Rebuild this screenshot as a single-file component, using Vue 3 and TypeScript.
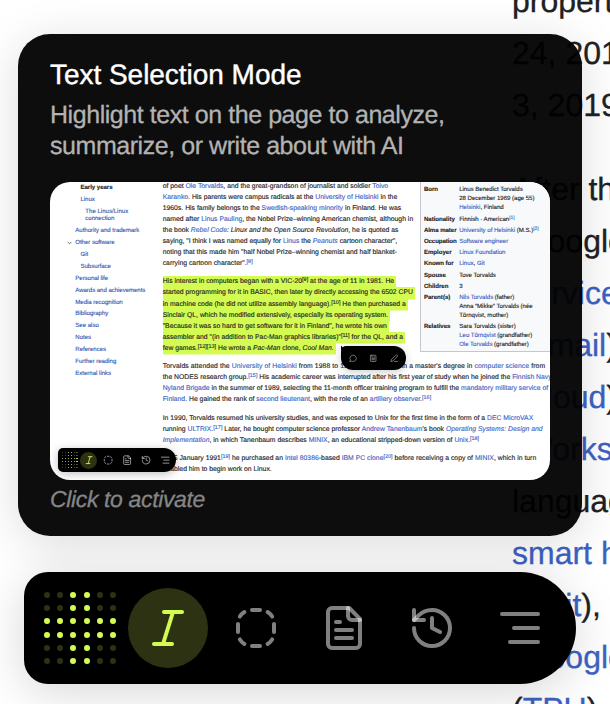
<script setup lang="ts">
interface Token { text: string; kind: string }
interface Line { text: string; width: number; mark?: boolean }
interface NavItem { text: string; width: number; level: number; kind?: string }
interface Fact { label: string; labelWidth: number; values: Line[] }

// Inline notation: [link], *italic*, {italic link}, ^reference^, ~linked reference~
function parse(source: string): Token[] {
  const kinds: Record<string, string> = { '[': 'link', '*': 'em', '{': 'em link', '^': 'sup', '~': 'sup link' }
  return (source.match(/\[[^\]]*\]|\*[^*]*\*|\{[^}]*\}|\^[^^]*\^|~[^~]*~|[^[*{^~]+/g) ?? []).map((part) => {
    const kind = kinds[part[0]]
    if (!kind) return { text: part, kind: '' }
    const inner = part.slice(1, -1)
    return { text: kind.startsWith('sup') ? `[${inner}]` : inner, kind }
  })
}

// Tracks a line of text so that it spans the given width.
const vFit = {
  mounted(el: HTMLElement, binding: { value: number }) {
    const count = (el.textContent ?? '').length
    const natural = el.getBoundingClientRect().width
    if (count > 1) el.style.letterSpacing = `${(binding.value - natural) / count}px`
  },
}

const pageParagraphs: string[][] = [
  ['properties', '24, 2015', '3, 2019.'],
  ['After the', '(Google', '[Services]', '([Gmail]),', '([Cloud]),', '([Workspace]', 'language', '[smart home]', '[Fitbit]), and', '([Google]', '([TPU]),'],
]

const paragraphs: Line[][] = [
  [
    { text: 'of poet [Ole Torvalds], and the great-grandson of journalist and soldier [Toivo]', width: 225.5 },
    { text: '[Karanko]. His parents were campus radicals at the [University of Helsinki] in the', width: 234.5 },
    { text: '1960s. His family belongs to the [Swedish-speaking minority] in Finland. He was', width: 238.5 },
    { text: 'named after [Linus Pauling], the Nobel Prize–winning American chemist, although in', width: 250.5 },
    { text: 'the book {Rebel Code}*: Linux and the Open Source Revolution*, he is quoted as', width: 235.8 },
    { text: 'saying, "I think I was named equally for [Linus] the {Peanuts} cartoon character",', width: 234.5 },
    { text: 'noting that this made him "half Nobel Prize–winning chemist and half blanket-', width: 234.2 },
    { text: 'carrying cartoon character".~8~', width: 90 },
  ],
  [
    { text: 'His interest in computers began with a VIC-20^9^ at the age of 11 in 1981. He', width: 231.5, mark: true },
    { text: 'started programming for it in BASIC, then later by directly accessing the 6502 CPU', width: 250.3, mark: true },
    { text: 'in machine code (he did not utilize assembly language).^10^ He then purchased a', width: 243.2, mark: true },
    { text: 'Sinclair QL, which he modified extensively, especially its operating system.', width: 225.5, mark: true },
    { text: '"Because it was so hard to get software for it in Finland", he wrote his own', width: 224.2, mark: true },
    { text: 'assembler and "(in addition to Pac-Man graphics libraries)"^11^ for the QL, and a', width: 240.3, mark: true },
    { text: 'few games.^12^^13^ He wrote a *Pac-Man* clone, *Cool Man*.', width: 171, mark: true },
  ],
  [
    { text: 'Torvalds attended the [University of Helsinki] from 1988 to 1996, graduating with a master\'s degree in [computer science] from', width: 382.5 },
    { text: 'the NODES research group.~15~ His academic career was interrupted after his first year of study when he joined the [Finnish Navy]', width: 389 },
    { text: '[Nyland Brigade] in the summer of 1989, selecting the 11-month officer training program to fulfill the [mandatory military service of]', width: 385.5 },
    { text: '[Finland]. He gained the rank of [second lieutenant], with the role of an [artillery observer].~16~', width: 268.5 },
  ],
  [
    { text: 'In 1990, Torvalds resumed his university studies, and was exposed to Unix for the first time in the form of a [DEC MicroVAX]', width: 370.5 },
    { text: 'running [ULTRIX].~17~ Later, he bought computer science professor [Andrew Tanenbaum]\'s book {Operating Systems: Design and}', width: 380 },
    { text: '{Implementation}, in which Tanenbaum describes [MINIX], an educational stripped-down version of [Unix].~18~', width: 316.5 },
  ],
  [
    { text: 'On 5 January 1991~19~ he purchased an [Intel 80386]-based [IBM PC clone]~20~ before receiving a copy of [MINIX], which in turn', width: 373.5 },
    { text: 'enabled him to begin work on Linux.', width: 109 },
  ],
]

const nav: NavItem[] = [
  { text: 'Early years', width: 32, level: 1, kind: 'current' },
  { text: 'Linux', width: 14.3, level: 1 },
  { text: 'The Linus/Linux', width: 43, level: 2, kind: 'wrapped' },
  { text: 'connection', width: 29, level: 2 },
  { text: 'Authority and trademark', width: 64, level: 0 },
  { text: 'Other software', width: 39.2, level: 0, kind: 'open' },
  { text: 'Git', width: 7.8, level: 1 },
  { text: 'Subsurface', width: 30.4, level: 1 },
  { text: 'Personal life', width: 32.8, level: 0 },
  { text: 'Awards and achievements', width: 70, level: 0 },
  { text: 'Media recognition', width: 47.3, level: 0 },
  { text: 'Bibliography', width: 33, level: 0 },
  { text: 'See also', width: 23.5, level: 0 },
  { text: 'Notes', width: 15.7, level: 0 },
  { text: 'References', width: 30.7, level: 0 },
  { text: 'Further reading', width: 41, level: 0 },
  { text: 'External links', width: 35.8, level: 0 },
]

const facts: Fact[] = [
  { label: 'Born', labelWidth: 14, values: [{ text: 'Linus Benedict Torvalds', width: 63.5 }, { text: '28 December 1969 (age 55)', width: 75.3 }, { text: '[Helsinki], Finland', width: 44.5 }] },
  { label: 'Nationality', labelWidth: 31, values: [{ text: 'Finnish · American~1~', width: 55.3 }] },
  { label: 'Alma mater', labelWidth: 32.6, values: [{ text: '[University of Helsinki] (M.S.)~2~', width: 79.3 }] },
  { label: 'Occupation', labelWidth: 32.8, values: [{ text: '[Software engineer]', width: 49 }] },
  { label: 'Employer', labelWidth: 27.7, values: [{ text: '[Linux Foundation]', width: 46.3 }] },
  { label: 'Known for', labelWidth: 29.6, values: [{ text: '[Linux], [Git]', width: 25.5 }] },
  { label: 'Spouse', labelWidth: 22, values: [{ text: 'Tove Torvalds', width: 36.7 }] },
  { label: 'Children', labelWidth: 24.5, values: [{ text: '3', width: 3.4 }] },
  { label: 'Parent(s)', labelWidth: 26.5, values: [{ text: '[Nils Torvalds] (father)', width: 55 }, { text: 'Anna "Mikke" Torvalds (née', width: 73.5 }, { text: 'Törnqvist, mother)', width: 49 }] },
  { label: 'Relatives', labelWidth: 26.5, values: [{ text: 'Sara Torvalds (sister)', width: 56.5 }, { text: '[Leo Törnqvist] (grandfather)', width: 73 }, { text: '[Ole Torvalds] (grandfather)', width: 69.6 }] },
]

const icons: { name: string; paths: string[] }[] = [
  { name: 'text', paths: ['M10 4h9', 'M5 20h9', 'M14.5 4l-5 16'] },
  { name: 'region', paths: ['M10 3h4', 'M10 21h4', 'M3 10v4', 'M21 10v4', 'M3.9 6.3Q4.6 5 6.2 4', 'M20.1 6.3Q19.4 5 17.8 4', 'M3.9 17.7Q4.6 19 6.2 20', 'M20.1 17.7Q19.4 19 17.8 20'] },
  { name: 'page', paths: ['M14.6 2H6a2 2 0 0 0-2 2v16a2 2 0 0 0 2 2h12a2 2 0 0 0 2-2V7.4z', 'M14 2v4a2 2 0 0 0 2 2h4', 'M8 9h2', 'M8 13h8', 'M8 17h8'] },
  { name: 'history', paths: ['M3 12a9 9 0 1 0 9-9 9.75 9.75 0 0 0-6.74 2.74L3 8', 'M3 3v5h5', 'M12 7v5l4 2'] },
  { name: 'menu', paths: ['M3 5h18', 'M9 12h12', 'M7 19h14'] },
]

const dots = Array.from({ length: 36 }, (_, i) => {
  const row = Math.floor(i / 6)
  const col = i % 6
  return { id: i, lit: row === 2 || row === 3 || col === 2 || col === 3 }
})
</script>

<template>
  <main class="page">
    <article class="backdrop">
      <p v-for="(paragraph, p) in pageParagraphs" :key="p">
        <span v-for="(line, l) in paragraph" :key="l" class="row"><span v-for="(t, i) in parse(line)" :key="i" :class="t.kind">{{ t.text }}</span></span>
      </p>
    </article>

    <section class="card">
      <h1><span v-fit="251.5">Text Selection Mode</span></h1>
      <p class="description">
        <span v-fit="394.5">Highlight text on the page to analyze,</span><br>
        <span v-fit="353.5">summarize, or write about with AI</span>
      </p>

      <div class="preview">
        <nav class="contents">
          <div v-for="item in nav" :key="item.text" class="entry" :class="['level-' + item.level, item.kind]">
            <svg v-if="item.kind === 'open'" class="chevron" viewBox="0 0 6 4"><path d="M.8 .8 3 3 5.2 .8" /></svg>
            <span v-fit="item.width">{{ item.text }}</span>
          </div>
        </nav>
        <div class="article">
          <p v-for="(paragraph, p) in paragraphs" :key="p">
            <span v-for="(line, l) in paragraph" :key="l" class="row"><span class="line" :class="{ mark: line.mark }"><span v-fit="line.width"><span v-for="(t, i) in parse(line.text)" :key="i" :class="t.kind">{{ t.text }}</span></span></span></span>
          </p>
        </div>
        <div class="infobox">
          <div v-for="fact in facts" :key="fact.label" class="fact">
            <b><span v-fit="fact.labelWidth">{{ fact.label }}</span></b>
            <div>
              <div v-for="value in fact.values" :key="value.text" class="value"><span v-fit="value.width"><span v-for="(t, i) in parse(value.text)" :key="i" :class="t.kind">{{ t.text }}</span></span></div>
            </div>
          </div>
        </div>

        <svg class="cursor" viewBox="0 0 6 8"><path d="M1 .6v5.6l1.3-1.1.9 2 .9-.4-.9-1.9h1.7z" /></svg>
        <div class="popup">
          <svg viewBox="0 0 24 24"><path d="M7.5 20.2A9.2 9.2 0 1 0 3.8 16.5L2.5 21.5z" /></svg>
          <svg viewBox="0 0 24 24"><path d="M6 3h12a2 2 0 0 1 2 2v14a2 2 0 0 1-2 2H6a2 2 0 0 1-2-2V5a2 2 0 0 1 2-2zM8 8h3M14 8h2M8 12h8M8 16h8" /></svg>
          <svg viewBox="0 0 24 24"><path d="M17 3a2.8 2.8 0 0 1 4 4L8 20l-5.5 1.5L4 16zM13 21h8" /></svg>
        </div>

        <div class="toolbar mini">
          <div class="grid"><i v-for="dot in dots" :key="dot.id" :class="{ lit: dot.lit }"></i></div>
          <span v-for="icon in icons" :key="icon.name" class="tool" :class="icon.name">
            <svg viewBox="0 0 24 24"><path v-for="d in icon.paths" :key="d" :d="d" /></svg>
          </span>
        </div>
      </div>

      <p class="hint"><span v-fit="155">Click to activate</span></p>
    </section>

    <div class="toolbar">
      <div class="grid"><i v-for="dot in dots" :key="dot.id" :class="{ lit: dot.lit }"></i></div>
      <button v-for="icon in icons" :key="icon.name" class="tool" :class="icon.name" :aria-label="icon.name">
        <svg viewBox="0 0 24 24"><path v-for="d in icon.paths" :key="d" :d="d" /></svg>
      </button>
    </div>
  </main>
</template>

<style>
body { background: #fff; }
</style>

<style scoped>
* { box-sizing: border-box; }
p, h1 { margin: 0; }

.page {
  position: relative;
  width: 610px;
  height: 704px;
  overflow: hidden;
  background: #fff;
  font-family: "Liberation Sans", Arial, sans-serif;
  text-rendering: geometricPrecision;
  white-space: nowrap;
}
.row { display: block; }
.link { color: #3c62c4; }
.em { font-style: italic; }
.sup { font-size: 0.8em; line-height: 0; position: relative; top: -0.38em; }

.backdrop {
  margin: -25px 0 0 512px;
  color: #202122;
  font-size: 32px;
  line-height: 52px;
  -webkit-text-stroke: 0.3px;
}
.backdrop p + p { margin-top: 32px; }

.card {
  position: absolute;
  left: 18px;
  top: 34px;
  width: 564px;
  height: 502px;
  padding: 23px 32px;
  border-radius: 32px;
  background: rgba(0, 0, 0, 0.948);
  box-shadow: 0 8px 48px rgba(0, 0, 0, 0.14);
}
h1 {
  color: #fff;
  font-size: 28px;
  line-height: 36px;
  font-weight: 400;
  -webkit-text-stroke: 0.4px #fff;
}
.description {
  margin-top: 7px;
  color: #b3b3b3;
  font-size: 25px;
  line-height: 31px;
  -webkit-text-stroke: 0.3px #b3b3b3;
}
.hint {
  margin-top: 5px;
  color: #868686;
  font-size: 23px;
  font-style: italic;
  line-height: 28px;
  -webkit-text-stroke: 0.3px #868686;
}

.preview {
  position: relative;
  display: flex;
  width: 500px;
  height: 298px;
  margin-top: 20px;
  overflow: hidden;
  border-radius: 20px;
  background: #fff;
  color: #202122;
  -webkit-text-stroke: 0.12px;
}
.contents {
  flex: none;
  width: 112.7px;
  padding-left: 25.3px;
  margin-top: -0.4px;
  color: #3458b0;
  font-size: 6.1px;
}
.entry { position: relative; height: 11.98px; line-height: 11.98px; }
.level-1 { padding-left: 5.2px; }
.level-2 { padding-left: 10px; }
.wrapped { height: 7.2px; }
.current { color: #202122; font-weight: 700; }
.chevron {
  position: absolute;
  left: -8px;
  top: 4px;
  width: 5px;
  height: 4px;
  fill: none;
  stroke: #444;
  stroke-width: 0.9;
}
.article {
  flex: none;
  width: 257px;
  margin-top: -1.5px;
  font-size: 6.8px;
  line-height: 11.12px;
}
.article p + p { margin-top: 7px; }
.article .row { height: 11.12px; }
.line { display: inline-block; height: 11.12px; }
.mark { padding-right: 2px; background: #d4fb51; box-shadow: 0 0.5px #d4fb51; }
.infobox {
  flex: none;
  width: 160px;
  height: 169.5px;
  padding: 3.4px 0 0 3.2px;
  border: 1px solid #c3c8ce;
  border-top: 0;
  background: #f8f9fa;
  font-size: 6.1px;
  line-height: 9px;
}
.fact { display: grid; grid-template-columns: 35.3px 1fr; margin-bottom: 2.2px; }
.value { height: 9px; }

.cursor { position: absolute; left: 290px; top: 163px; width: 6px; height: 8px; fill: #000; }
.popup {
  position: absolute;
  left: 291px;
  top: 164px;
  display: flex;
  align-items: center;
  gap: 12px;
  width: 65px;
  height: 24px;
  padding: 0 8px;
  border-radius: 5px 12px 12px 12px;
  background: #000;
  box-shadow: 0 2px 10px rgba(0, 0, 0, 0.2);
}
.popup svg { width: 8.7px; height: 8.7px; fill: none; stroke: #a3a3a3; stroke-width: 2; stroke-linecap: round; stroke-linejoin: round; }

.toolbar {
  position: absolute;
  left: 24px;
  top: 572px;
  display: flex;
  align-items: center;
  gap: 8px;
  width: 552px;
  height: 112px;
  padding: 0 16px;
  border-radius: 24px 56px 56px 24px;
  background: #000;
  box-shadow: 0 8px 48px rgba(0, 0, 0, 0.16);
}
.grid {
  display: grid;
  grid-template-columns: repeat(6, 13.35px);
  grid-auto-rows: 13.35px;
  place-items: center;
  width: 80px;
}
.grid i { width: 5.8px; height: 5.8px; border-radius: 50%; background: #2d3213; }
.grid i.lit { background: #d4fb51; }
.tool {
  display: grid;
  flex: none;
  place-items: center;
  width: 80px;
  height: 80px;
  padding: 0;
  border: 0;
  border-radius: 50%;
  background: none;
}
.tool svg {
  width: 48px;
  height: 48px;
  fill: none;
  stroke: rgba(255, 255, 255, 0.5);
  stroke-width: 2;
  stroke-linecap: round;
  stroke-linejoin: round;
}
.tool.text { background: #2d3213; }
.tool.text svg { stroke: #d4fb51; }

.mini {
  left: 8px;
  top: 266px;
  gap: 2px;
  width: 118px;
  height: 24px;
  padding: 0 3.4px;
  border-radius: 5px 12px 12px 5px;
  box-shadow: 0 2px 10px rgba(0, 0, 0, 0.25);
}
.mini .grid { grid-template-columns: repeat(6, 2.85px); grid-auto-rows: 2.85px; width: 17.1px; }
.mini .grid i { width: 1.2px; height: 1.2px; background: #55583f; }
.mini .grid i.lit { background: #c5e85a; }
.mini .tool { width: 17px; height: 17px; }
.mini .tool svg { width: 10.3px; height: 10.3px; }
.mini .tool:not(.text) svg { stroke: rgba(255, 255, 255, 0.65); }
</style>
